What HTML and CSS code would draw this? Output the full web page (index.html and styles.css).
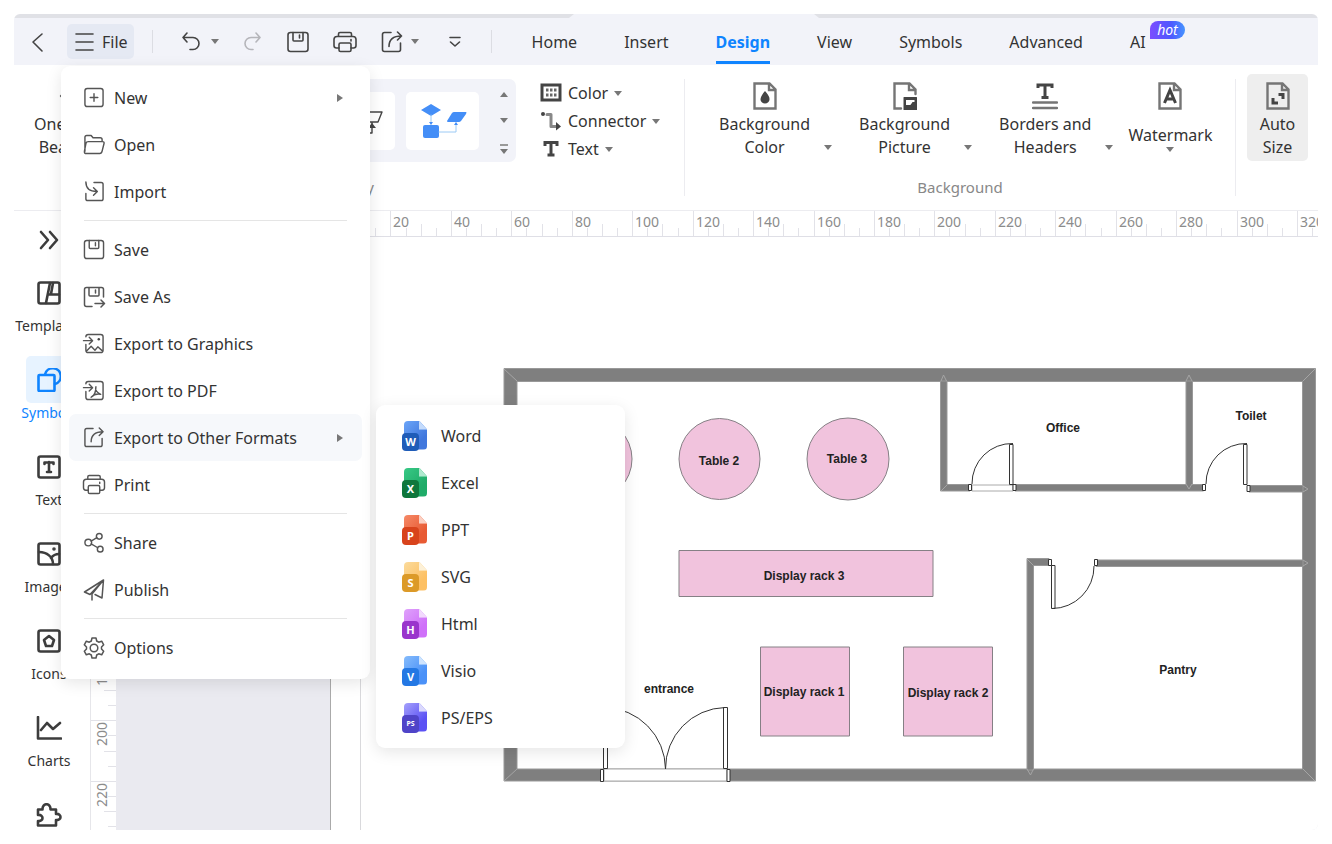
FILE: index.html
```
<!DOCTYPE html>
<html lang="en">
<head>
  <meta charset="UTF-8" />
  <meta name="viewport" content="width=device-width, initial-scale=1.0"/>
  <title>Floor Plan Editor</title>
  <link rel="stylesheet" href="styles.css">
</head>
<body>

  <!-- Shared icons -->
  <svg class="sprite" aria-hidden="true">
    <symbol id="i-save" viewBox="0 0 22 22">
      <rect x="1" y="1.5" width="20" height="19" rx="2.5"/>
      <path d="M6 1.5v7.5q0 1 1 1h8q1 0 1-1V1.5M12.5 4v3"/>
    </symbol>
    <symbol id="i-print" viewBox="0 0 24 22">
      <path d="M5.500 5.500V3q0-1.500 1.500-1.500h10q1.500 0 1.500 1.500v2.500M6 17H3.500Q1 17 1 14.500V8.500Q1 5.500 4 5.500h16q3 0 3 3v6q0 2.500-2.500 2.500H18M18 8.500v1.500"/>
      <rect x="6" y="12" width="12" height="8.500" rx="1.500"/>
    </symbol>
    <symbol id="i-share-out" viewBox="0 0 22 22">
      <path d="M10 1.500H3.500q-2 0-2 2v15q0 2 2 2h14q2 0 2-2V12"/>
      <path d="M8 15.500C8 9 12 5 20.500 5M16.500 1l4 4-4 4"/>
    </symbol>
    <symbol id="i-page" viewBox="0 0 24 28">
      <path d="M1.500 1.500h15l6 6v19h-21zM16 2v6h6"/>
    </symbol>
  </svg>

  <div class="app">
    <div class="title-strip"><span class="title-tab"></span></div>

    <!-- Top bar -->
    <header class="topbar">
      <button class="icon-btn back" aria-label="Back"><svg width="16" height="22" viewBox="0 0 16 22"><path d="M12 3L3 11l9 9"/></svg></button>
      <button class="file-btn"><svg width="20" height="20" viewBox="0 0 20 20"><path d="M1 2h17M1 10h17M1 18h17"/></svg>File</button>
      <span class="bar-line"></span>
      <div class="quick-tools">
        <button class="icon-btn" aria-label="Undo"><svg width="22" height="22" viewBox="0 0 22 22"><path d="M6 2L2 6.500 6 11M2 6.500h10a6 6 0 0 1 0 12H9"/></svg><i class="caret"></i></button>
        <button class="icon-btn muted" aria-label="Redo"><svg width="20" height="22" viewBox="0 0 20 22"><path d="M13 2l4 4.500-4 4.500M17 6.500H8a6 6 0 0 0 0 12h2"/></svg></button>
        <button class="icon-btn" aria-label="Save"><svg width="22" height="22"><use href="#i-save"/></svg></button>
        <button class="icon-btn" aria-label="Print"><svg width="24" height="22"><use href="#i-print"/></svg></button>
        <button class="icon-btn" aria-label="Export"><svg width="22" height="22"><use href="#i-share-out"/></svg><i class="caret"></i></button>
        <button class="icon-btn" aria-label="More"><svg width="24" height="22" viewBox="0 0 24 22"><path d="M7 6.500h10M7.500 11l4.500 4 4.500-4"/></svg></button>
      </div>
      <span class="bar-line"></span>
      <nav class="tabs">
        <a href="#">Home</a>
        <a href="#">Insert</a>
        <a href="#" class="active">Design</a>
        <a href="#">View</a>
        <a href="#">Symbols</a>
        <a href="#">Advanced</a>
        <a href="#">AI<span class="hot">hot</span></a>
      </nav>
    </header>

    <!-- Ribbon -->
    <section class="ribbon">
      <div class="group beautify">
        <div class="group-body">
          <button class="big-btn"><svg width="28" height="28" viewBox="0 0 28 28"><path d="M5 14h8M14 3v22M20 8l3 3M20 18l3-3"/></svg>One-Click<br>Beautify</button>
          <div class="gallery">
            <button class="card" aria-label="Style 1"></button>
            <button class="card" aria-label="Style 2"></button>
            <button class="card" aria-label="Style 3"><svg width="48" height="38" viewBox="0 0 48 38"><path class="thin" d="M30 10h17l-4 10H27zM37 21v10M5 24h14v12H5zM20 31h17"/><path class="dark" d="M33 26l4-5 4 5z"/></svg></button>
            <button class="card" aria-label="Style 4">
              <svg width="48" height="38" viewBox="0 0 48 38">
                <path class="blue" d="M12 2l10 6-10 6L2 8zM28 19l5-8q1-1 2-1h12q1 0 0 2l-5 7q-1 1-2 1H29q-1 0-1-1z"/>
                <rect class="blue" x="4" y="23" width="16" height="13" rx="2"/>
                <path class="wire" d="M12 13v9M20 30h17v-9"/>
                <path class="blue" d="M10 20h4l-2 3zM35 23h4l-2-3z"/>
              </svg>
            </button>
            <div class="gallery-nav">
              <button aria-label="Previous styles"><i class="caret up"></i></button>
              <button aria-label="Next styles"><i class="caret"></i></button>
              <button class="all" aria-label="All styles"><i class="caret"></i></button>
            </div>
          </div>
          <div class="style-list">
            <button><svg width="22" height="22" viewBox="0 0 22 22"><path class="heavy" d="M2 3h18v15H2z"/><path class="dots" d="M6 8h2.500M10 8h2.500M14 8h2.500M6 13h2.500M10 13h2.500M14 13h2.500"/></svg>Color<i class="caret"></i></button>
            <button><svg width="22" height="22" viewBox="0 0 22 22"><circle class="dark" cx="3" cy="4" r="2"/><path class="grey" d="M7 4.500h4v12h5"/><path class="dark" d="M16 12l5 4.500-5 4z"/></svg>Connector<i class="caret"></i></button>
            <button><svg width="22" height="22" viewBox="0 0 22 22"><path class="heavy" d="M5 8V4.500h12V8M11 4v13M7.500 17h7"/></svg>Text<i class="caret"></i></button>
          </div>
        </div>
        <p class="group-label">Beautify</p>
      </div>

      <div class="group background">
        <div class="group-body">
          <button class="big-btn split spaced"><span><svg width="24" height="28"><use href="#i-page"/><path class="dark" d="M12 9q5 5.500 4.500 8.500a4.500 4 0 0 1-9 0Q7.500 14 12 9z"/></svg>Background<br>Color</span><i class="caret"></i></button>
          <button class="big-btn split spaced"><span><svg width="24" height="28" viewBox="0 0 24 28"><path d="M8 26.500H1.500v-25h15l6 6V12M16 2v6h6"/><path class="dark" d="M11 15h12.500q.5 0 .5.500v12q0 .5-.5.500H11q-.5 0-.5-.5v-12q0-.5.5-.5zM13 18v5h3.500q1.500 0 2-1.500l1-1.500h2V18z" fill-rule="evenodd"/></svg>Background<br>Picture</span><i class="caret"></i></button>
          <button class="big-btn split"><span><svg width="26" height="28" viewBox="0 0 26 28"><path class="heavy" d="M6 6V3h14v3M13 3v12M9.500 15.500h7"/><path d="M1 20.500h24M1 26h24"/></svg>Borders and<br>Headers</span><i class="caret"></i></button>
          <button class="big-btn drop"><svg width="24" height="28"><use href="#i-page"/><path class="heavy" d="M6.500 21L12 8l5.500 13M8.500 17h7"/></svg><span>Watermark</span><i class="caret"></i></button>
        </div>
        <p class="group-label">Background</p>
      </div>

      <div class="group sizing">
        <button class="big-btn pressed"><svg width="24" height="28"><use href="#i-page"/><path class="heavy" d="M12.500 12.500H17V17M7 16v5h5"/></svg>Auto<br>Size</button>
      </div>
    </section>

    <!-- Work area -->
    <div class="workspace">
      <aside class="sidebar">
        <button class="expand" aria-label="Expand"><svg width="22" height="20" viewBox="0 0 22 20"><path d="M3 2l7 8-7 8M12 2l7 8-7 8"/></svg></button>
        <button class="tool"><span class="tool-icon"><svg width="24" height="24" viewBox="0 0 24 24"><rect x="1.500" y="1.500" width="21" height="21" rx="2"/><path d="M13 2L9 22M11 13.500H22M16 2l-2 11"/></svg></span>Templates</button>
        <button class="tool active"><span class="tool-icon"><svg width="24" height="24" viewBox="0 0 24 24"><rect x="1.500" y="7" width="16" height="16" rx="1"/><path d="M8 6.500a8 8 0 1 1 10 9.500"/></svg></span>Symbols</button>
        <button class="tool"><span class="tool-icon"><svg width="24" height="24" viewBox="0 0 24 24"><rect x="1.500" y="1.500" width="21" height="21" rx="2"/><path d="M7.500 9V7.500h9V9M12 7v10M10 17h4"/></svg></span>Text</button>
        <button class="tool"><span class="tool-icon"><svg width="24" height="24" viewBox="0 0 24 24"><rect x="1.500" y="1.500" width="21" height="21" rx="2"/><path d="M2 10c8 0 14 5 14 12M14 16q3-4 8-4"/><circle class="dark" cx="17" cy="7" r="1.800"/></svg></span>Images</button>
        <button class="tool"><span class="tool-icon"><svg width="24" height="24" viewBox="0 0 24 24"><rect x="1.500" y="1.500" width="21" height="21" rx="2"/><path d="M12 7l5 4-2 6H9l-2-6z"/></svg></span>Icons</button>
        <button class="tool"><span class="tool-icon"><svg width="26" height="24" viewBox="0 0 26 24"><path d="M2 1v21.500h23M5 14l6-7 6 6 7-6"/></svg></span>Charts</button>
        <button class="tool" aria-label="Plugins"><span class="tool-icon"><svg width="26" height="24" viewBox="0 0 26 24"><path d="M2 8V6.500h4.500C6 -.5 15 -.5 14.500 6.500H20V11c6-1 6 7 0 6V22.500H2V18c6 1 6-7 0-6z"/></svg></span></button>
      </aside>

      <div class="editor">
        <div class="ruler-corner"></div>
        <svg class="ruler ruler-x" id="rulerX"></svg>
        <svg class="ruler ruler-y" id="rulerY"></svg>

        <svg class="canvas" role="img" aria-label="Shop floor plan">
          <rect class="page" x="214.500" y="-2" width="3000" height="2000"/>
          <path class="page-guide" d="M244.500 0v1000"/>

          <g transform="translate(-116 -237)">
            <!-- Walls -->
            <path class="wall" fill-rule="evenodd" d="M504 368.500h811.500v412.500H504zM517 381.500v387.500h785.500V381.500z"/>
            <path class="wall" d="M940.500 381h6.500v103.500h23v6.500h-29.500z"/>
            <path class="wall" d="M1015 484.500h171V381h6.500v103.500h11v6.500h-188.500z"/>
            <path class="wall" d="M1249 485.500h54v6.500h-54zM1096 560h207v6.500h-207z"/>
            <path class="wall" d="M1027 558.500h22v7h-15.500V770H1027z"/>
            <path class="joint" d="M504 369l13 12M1315 369l-12 12M504 781l13-12M1315 781l-12-12M941 381l2.500-6 3 6M1186 381l3-6 3 6M941 491l6-6M1186 484l3 5 3-5M1303 486l5 3-5 3M1303 560l5 3-5 3M1027 559l6 6M1027 769l3.500 6 3-6"/>

            <!-- Entrance -->
            <path class="opening" d="M604 769h123v12H604z"/>
            <path class="frame" d="M600.500 769.500h3v12h-3zM727 769.500h3v12h-3zM603.500 707.500h4v61h-4zM723.500 707.500h4v61h-4z"/>
            <path class="swing" d="M665.500 769A62 62 0 0 0 605 707.500M665.500 769A61 61 0 0 1 725 707.500"/>

            <!-- Office and toilet doors -->
            <path class="opening" d="M972 485h41v6h-41z"/>
            <path class="frame" d="M968.500 484.500h3v6h-3zM1013 484.500h3v6h-3zM1202.500 484.500h3v6h-3zM1247 485.500h3v6h-3zM1009.500 444.500h3.500v40h-3.500zM1243.500 444.500h3.500v40h-3.500z"/>
            <path class="swing" d="M972 484A40 40 0 0 1 1013 443.500M1206 484A40 40 0 0 1 1247 443.500"/>

            <!-- Pantry door -->
            <path class="frame" d="M1048.500 559.500h3v6h-3zM1094.500 559.500h3v6h-3zM1051.500 565.500h3.500v43h-3.500z"/>
            <path class="swing" d="M1094 566A42 42 0 0 1 1052 608.500"/>

            <!-- Furniture -->
            <circle class="furniture" cx="591" cy="459" r="41"/>
            <circle class="furniture" cx="719.500" cy="459" r="40.500"/>
            <circle class="furniture" cx="848" cy="459" r="41"/>
            <rect class="furniture" x="679" y="550.500" width="254" height="46"/>
            <rect class="furniture" x="760.500" y="647" width="89" height="89"/>
            <rect class="furniture" x="903.500" y="647" width="89" height="89"/>

            <g class="plan-text">
              <text x="719" y="465">Table 2</text>
              <text x="847" y="463">Table 3</text>
              <text x="804" y="580">Display rack 3</text>
              <text x="804" y="696">Display rack 1</text>
              <text x="948" y="697">Display rack 2</text>
              <text x="669" y="693">entrance</text>
              <text x="1063" y="432">Office</text>
              <text x="1251" y="420">Toilet</text>
              <text x="1178" y="674">Pantry</text>
            </g>
          </g>
        </svg>
      </div>
    </div>

    <!-- File menu -->
    <div class="menu file-menu">
      <button class="menu-item"><svg width="21" height="21" viewBox="0 0 22 22"><rect x="1.500" y="1.500" width="19" height="19" rx="2.500"/><path d="M11 7v8M7 11h8"/></svg>New<i class="arrow"></i></button>
      <button class="menu-item"><svg width="22" height="21" viewBox="0 0 23 22"><path d="M2 18V3.500Q2 1.500 4 1.500h4.500l2 2.500H18q2 0 2 2v2M5.500 8h15q2 0 1.500 2l-2 8q-.5 2.500-2.500 2.500H3.500q-2.500 0-2-2.500l1.500-8q.5-2 2.500-2z"/></svg>Open</button>
      <button class="menu-item"><svg width="22" height="21" viewBox="0 0 22 22"><path d="M11 1.500h7.500q2 0 2 2v15q0 2-2 2h-14q-2 0-2-2V13M2.500 1c0 6 3 10 11.500 10M10.500 7l4 4-4 4"/></svg>Import</button>
      <hr>
      <button class="menu-item"><svg width="21" height="21"><use href="#i-save"/></svg>Save</button>
      <button class="menu-item"><svg width="22" height="22" viewBox="0 0 22 22"><path d="M9 20.500H3.500q-2 0-2-2v-15q0-2 2-2h15q2 0 2 2V11M6 1.500V9q0 1 1 1h8q1 0 1-1V1.500M12.500 4v3M12 17.500h9M18 14l3.500 3.500L18 21"/></svg>Save As</button>
      <button class="menu-item"><svg width="22" height="21" viewBox="0 0 22 22"><path d="M2.500 4q0-2.500 2.500-2.500h13q2.500 0 2.500 2.500v14q0 2.500-2.500 2.500H5q-2.500 0-2.500-2.500v-6M0 8h9M6 4.500L9.500 8 6 11.500M3 19l5-5 4 4 3-3.500 5 4.500"/><circle class="dark" cx="16" cy="6.500" r="1.300"/></svg>Export to Graphics</button>
      <button class="menu-item"><svg width="22" height="21" viewBox="0 0 22 22"><path d="M2.500 4q0-2.500 2.500-2.500h13q2.500 0 2.500 2.500v14q0 2.500-2.500 2.500H5q-2.500 0-2.500-2.500v-6M0 8h9M6 4.500L9.500 8 6 11.500"/><path d="M13 7c-1 3 1 6 5 8-4-1-7 0-10 3 4-2 5-6 5-11z"/></svg>Export to PDF</button>
      <button class="menu-item current"><svg width="21" height="21"><use href="#i-share-out"/></svg>Export to Other Formats<i class="arrow"></i></button>
      <button class="menu-item"><svg width="24" height="21"><use href="#i-print"/></svg>Print</button>
      <hr>
      <button class="menu-item"><svg width="21" height="21" viewBox="0 0 22 22"><circle cx="5" cy="11" r="3.500"/><circle cx="16.500" cy="4.500" r="3"/><circle cx="17.500" cy="18" r="3"/><path d="M8 9.500L14 6M8 12.500l7 4"/></svg>Share</button>
      <button class="menu-item"><svg width="21" height="22" viewBox="0 0 22 22"><path d="M20.500 1L1.500 13l5.500 2.500zM20.500 1L9 15v6M20.500 1l-1.500 18-7-3.500"/></svg>Publish</button>
      <hr>
      <button class="menu-item"><svg width="22" height="22" viewBox="0 0 22 22"><circle cx="11" cy="11" r="3.800"/><path d="M9 1h4l.7 3 2 1.200 3-1 2 3.600L18.500 10v2l2.200 2.200-2 3.600-3-1-2 1.200-.7 3H9l-.7-3-2-1.200-3 1-2-3.600L3.500 12v-2L1.300 7.800l2-3.600 3 1 2-1.200z"/></svg>Options</button>
    </div>

    <!-- Export formats -->
    <div class="menu format-menu">
      <button class="menu-item"><span class="format word"><b>W</b></span>Word</button>
      <button class="menu-item"><span class="format excel"><b>X</b></span>Excel</button>
      <button class="menu-item"><span class="format ppt"><b>P</b></span>PPT</button>
      <button class="menu-item"><span class="format vector"><b>S</b></span>SVG</button>
      <button class="menu-item"><span class="format html"><b>H</b></span>Html</button>
      <button class="menu-item"><span class="format visio"><b>V</b></span>Visio</button>
      <button class="menu-item"><span class="format eps"><b class="small">PS</b></span>PS/EPS</button>
    </div>
  </div>

  <script src="rulers.js"></script>
</body>
</html>
```
FILE: rulers.js
```
// 320 units take 967px at the current zoom
const scale = 967 / 320;

function drawRuler(svg, origin, vertical) {
  const length = vertical ? svg.clientHeight : svg.clientWidth;
  let ticks = "";
  let labels = "";

  for (let unit = 0; origin + unit * scale < length; unit += 5) {
    const pos = Math.round(origin + unit * scale);
    if (pos < 0) continue;

    const start = unit % 20 === 0 ? 0 : unit % 10 === 0 ? 13 : 17;
    ticks += vertical ? `M${start} ${pos}.5H26` : `M${pos}.5 ${start}V26`;

    if (unit % 20 === 0) {
      labels += vertical
        ? `<text text-anchor="end" transform="translate(16 ${pos + 2}) rotate(-90)">${unit}</text>`
        : `<text x="${pos + 3}" y="16">${unit}</text>`;
    }
  }

  svg.innerHTML = `<path d="${ticks}"/>${labels}`;
}

drawRuler(document.getElementById("rulerX"), 214, false);
drawRuler(document.getElementById("rulerY"), -121, true);
```
FILE: styles.css
```
* {
  margin: 0;
  padding: 0;
  box-sizing: border-box;
}

body {
  font-family: 'Segoe UI', 'Noto Sans', sans-serif;
  font-size: 16px;
  color: #333;
  background-color: #fff;
  padding: 14px;
}

button {
  font: inherit;
  color: inherit;
  background: none;
  border: none;
  cursor: pointer;
}

a {
  color: inherit;
  text-decoration: none;
}

svg {
  fill: none;
  stroke: #444;
  stroke-width: 1.6;
  stroke-linecap: round;
  stroke-linejoin: round;
  flex-shrink: 0;
}

.sprite {
  position: absolute;
  width: 0;
  height: 0;
}

.dark {
  fill: #444;
  stroke: none;
}

.heavy {
  stroke: #444;
  stroke-width: 3;
  stroke-linecap: butt;
  stroke-linejoin: miter;
}

.dots {
  stroke: #666;
  stroke-width: 3;
  stroke-linecap: butt;
}

.grey {
  stroke: #888;
  stroke-width: 3;
}

.caret {
  border-left: 4px solid transparent;
  border-right: 4px solid transparent;
  border-top: 5px solid #777;
}

.caret.up {
  border-top: none;
  border-bottom: 5px solid #777;
}

.app {
  position: relative;
  display: flex;
  flex-direction: column;
  height: calc(100vh - 28px);
  border-radius: 6px;
  overflow: hidden;
}

/* Top bar */
.title-strip {
  height: 4px;
  background-color: #e0e1e6;
  padding-left: 555px;
}

.title-tab {
  display: block;
  width: 250px;
  height: 4px;
  background-color: #f2f3f9;
  clip-path: polygon(5px 0, 245px 0, 100% 100%, 0 100%);
}

.topbar {
  display: flex;
  align-items: center;
  height: 47px;
  flex-shrink: 0;
  padding-left: 16px;
  background-color: #f2f3f9;
}

.icon-btn {
  display: flex;
  align-items: center;
  gap: 8px;
}

.muted svg {
  stroke: #b5b5ba;
}

.file-btn {
  display: flex;
  align-items: center;
  gap: 7px;
  height: 35px;
  margin: 0 18px 0 21px;
  padding: 0 6px 0 8px;
  border-radius: 5px;
  background-color: #e5e9f3;
}

.bar-line {
  width: 1px;
  height: 23px;
  background-color: #dcdde3;
}

.quick-tools {
  display: flex;
  gap: 24px;
  padding: 0 24px 0 28px;
}

.tabs {
  display: flex;
  gap: 47px;
  padding-left: 40px;
  align-self: stretch;
}

.tabs a {
  position: relative;
  height: 46px;
  line-height: 49px;
}

.tabs .active {
  color: #0f84ff;
  font-weight: bold;
  border-bottom: 3px solid #0f84ff;
}

.hot {
  position: absolute;
  left: 20px;
  top: 3px;
  width: 35px;
  height: 18px;
  border-radius: 8px 9px 9px 0;
  background: linear-gradient(90deg, #7c4dff, #4d59ff 60%, #4694ff);
  color: #fff;
  font-size: 14px;
  font-style: italic;
  line-height: 17px;
  text-align: center;
}

/* Ribbon */
.ribbon {
  display: flex;
  height: 145px;
  flex-shrink: 0;
  padding-top: 14px;
}

.group {
  display: flex;
  flex-direction: column;
  justify-content: space-between;
  height: 117px;
  border-right: 1px solid #ececf0;
}

.group-body {
  display: flex;
  align-items: flex-start;
}

.group-label {
  text-align: center;
  font-size: 15px;
  line-height: 18px;
  color: #888;
}

.beautify {
  width: 671px;
}

.beautify .group-body {
  gap: 24px;
  padding: 0 24px 0 20px;
}

.beautify .group-label {
  padding-right: 8px;
}

.background {
  width: 551px;
}

.background .group-body {
  gap: 15px;
  padding-left: 34px;
}

.sizing {
  border-right: none;
  padding-left: 11px;
}

.big-btn {
  line-height: 23px;
  padding-top: 3px;
}

.big-btn svg {
  display: block;
  margin: 0 auto 3px;
  stroke: #757575;
  stroke-width: 2.4;
  stroke-linejoin: miter;
}

.split {
  display: flex;
  align-items: flex-end;
  gap: 14px;
}

.split .caret {
  margin-bottom: 9px;
}

.spaced {
  margin-right: 12px;
}

.drop {
  display: flex;
  flex-direction: column;
  align-items: center;
}

.drop svg {
  margin-bottom: 14px;
}

.pressed {
  width: 61px;
  height: 87px;
  margin-top: -5px;
  padding: 8px 0 5px;
  border-radius: 5px;
  background-color: #eee;
}

.gallery {
  display: flex;
  gap: 11px;
  height: 83px;
  margin-left: auto;
  padding: 13px 8px 8px 12px;
  border-radius: 7px;
  background-color: #f2f3f9;
}

.card {
  width: 73px;
  height: 58px;
  border-radius: 5px;
  background-color: #fff;
}

.card svg {
  display: block;
  margin: 0 auto;
}

.blue {
  fill: #448ef7;
  stroke: none;
}

.wire {
  stroke: #9ccaf5;
  stroke-width: 1;
}

.thin {
  stroke-width: 1.4;
}

.gallery-nav {
  display: flex;
  flex-direction: column;
  justify-content: space-between;
  padding-left: 10px;
}

.gallery-nav button {
  display: flex;
  height: 5px;
}

.gallery-nav .all {
  height: 10px;
  padding-top: 3px;
  border-top: 2px solid #999;
}

.style-list {
  width: 120px;
}

.style-list button {
  display: flex;
  align-items: center;
  gap: 6px;
  height: 28px;
}

/* Sidebar */
.workspace {
  display: flex;
  flex: 1;
  min-height: 0;
  border-top: 1px solid #ececf0;
}

.sidebar {
  width: 77px;
  flex-shrink: 0;
  padding-right: 6px;
  overflow: hidden;
  border-right: 1px solid #e6e6ea;
}

.sidebar svg {
  stroke: #3d3d3d;
  stroke-width: 2.6;
}

.expand {
  display: block;
  height: 58px;
  width: 100%;
}

.expand svg {
  display: block;
  margin: 0 auto;
}

.tool {
  display: flex;
  flex-direction: column;
  align-items: center;
  width: 100%;
  height: 87px;
  font-size: 14px;
  line-height: 20px;
}

.tool-icon {
  display: flex;
  align-items: center;
  justify-content: center;
  width: 47px;
  height: 47px;
  flex-shrink: 0;
  border-radius: 5px;
}

.tool.active {
  color: #0f84ff;
}

.active .tool-icon {
  background-color: #e7f3ff;
}

.tool.active svg {
  stroke: #0f84ff;
}

/* Editor */
.editor {
  display: grid;
  grid-template-columns: 25px 1fr;
  grid-template-rows: 26px 1fr;
  flex: 1;
  min-width: 0;
}

.ruler-corner,
.ruler-x {
  border-bottom: 1px solid #dfdfe6;
}

.ruler {
  width: 100%;
  height: 100%;
  stroke: #e2e2e8;
  stroke-width: 1;
  stroke-linecap: butt;
}

.ruler text {
  font-size: 14px;
  fill: #8c8c8c;
  stroke: none;
}

.canvas {
  width: 100%;
  height: 100%;
  stroke-linecap: butt;
  background-color: #eaeaf0;
}

.page {
  fill: #fff;
  stroke: #aaa;
  stroke-width: 1;
}

.page-guide {
  stroke: #d9d9dc;
  stroke-width: 1;
}

.wall {
  fill: #7f7f7f;
  stroke: #999;
  stroke-width: 1;
}

.joint {
  stroke: #a5a5a5;
  stroke-width: 1;
}

.opening {
  fill: #fff;
  stroke: #aaa;
  stroke-width: 1;
}

.frame {
  fill: #fff;
  stroke: #333;
  stroke-width: 1;
}

.swing {
  stroke: #333;
  stroke-width: 1;
}

.furniture {
  fill: #f1c3dd;
  stroke: #858085;
  stroke-width: 1;
}

.plan-text {
  font-family: Arial, 'Liberation Sans', sans-serif;
  font-size: 12px;
  font-weight: bold;
  text-anchor: middle;
  fill: #222;
  stroke: none;
}

/* Menus */
.menu {
  position: absolute;
  border-radius: 9px;
  background-color: #fff;
  box-shadow: 0 4px 16px rgba(0, 0, 0, 0.1);
}

.file-menu {
  left: 47px;
  top: 52px;
  width: 309px;
  padding: 8px;
}

.format-menu {
  left: 362px;
  top: 391px;
  width: 249px;
  padding: 7px 8px;
}

.menu-item {
  display: flex;
  align-items: center;
  width: 100%;
  height: 47px;
  border-radius: 7px;
}

.menu-item svg {
  width: 24px;
  margin: 0 8px 0 13px;
  stroke: #555;
  stroke-width: 1.5;
}

.menu-item.current {
  background-color: #f6f8fb;
}

.menu hr {
  border: none;
  border-top: 1px solid #e5e5e5;
  margin: 5px 15px;
}

.arrow {
  margin: 0 19px 0 auto;
  border-top: 4px solid transparent;
  border-bottom: 4px solid transparent;
  border-left: 6px solid #777;
}

/* File type icons */
.format {
  position: relative;
  width: 25px;
  height: 30px;
  margin: 0 14px 0 18px;
}

.format::before {
  content: "";
  position: absolute;
  inset: 0 0 1px 2px;
  border-radius: 4px;
  background: linear-gradient(135deg, var(--light), var(--main) 70%);
  clip-path: polygon(0 0, 15px 0, 100% 9px, 100% 100%, 0 100%);
}

.format::after {
  content: "";
  position: absolute;
  right: 0;
  top: 0;
  width: 8px;
  height: 9px;
  background-color: var(--light);
  background-image: linear-gradient(rgba(255, 255, 255, 0.6), rgba(255, 255, 255, 0.6));
  clip-path: polygon(0 0, 100% 100%, 0 100%);
}

.format b {
  position: absolute;
  z-index: 1;
  left: 0;
  bottom: 0;
  width: 17px;
  height: 18px;
  border-radius: 4px;
  background-color: var(--badge);
  color: #fff;
  font-size: 11px;
  line-height: 18px;
  text-align: center;
}

.format .small {
  font-size: 7px;
}

.word {
  --light: #6ba5f8;
  --main: #4077dd;
  --badge: #1f5cb8;
}

.excel {
  --light: #38c986;
  --main: #1fab68;
  --badge: #0f773c;
}

.ppt {
  --light: #f68a68;
  --main: #e85a33;
  --badge: #d8431c;
}

.vector {
  --light: #fbdb9c;
  --main: #fdc063;
  --badge: #dc9a28;
}

.html {
  --light: #dfa2fb;
  --main: #cf70f9;
  --badge: #9a35cc;
}

.visio {
  --light: #86bcfc;
  --main: #4a91f8;
  --badge: #2478e4;
}

.eps {
  --light: #a5a1fb;
  --main: #5b51f4;
  --badge: #4f44c8;
}
```
